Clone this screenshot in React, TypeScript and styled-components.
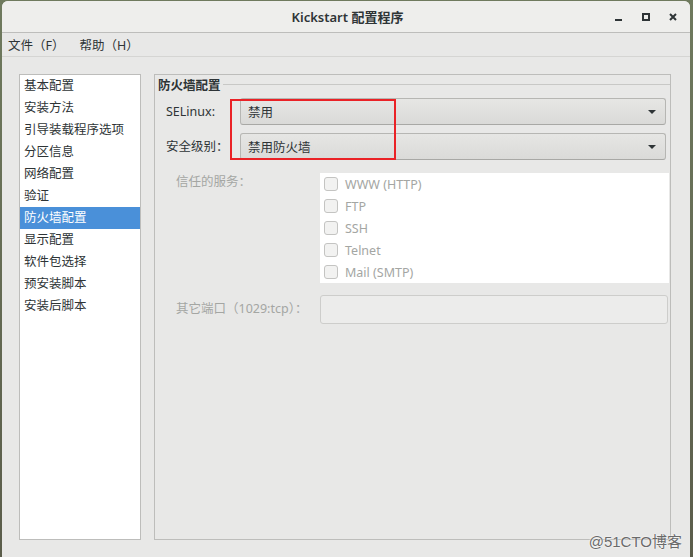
import React from "react";
import styled, { createGlobalStyle } from "styled-components";

const GlobalStyle = createGlobalStyle`
  html, body {
    margin: 0;
    padding: 0;
  }
  body {
    font-family: "Noto Sans", "Noto Sans CJK SC", sans-serif;
    font-size: 12.5px;
    color: #2e3436;
  }
`;

const Desktop = styled.div`
  position: relative;
  width: 693px;
  height: 557px;
  box-sizing: border-box;
  padding: 1px 3px 0 2px;
  background: linear-gradient(180deg, #6f7a5e 0%, #5b5d4b 100%);
  overflow: hidden;
`;

const Window = styled.div`
  display: flex;
  flex-direction: column;
  height: 100%;
  background: #e8e8e7;
  border-radius: 6px 6px 0 0;
  overflow: hidden;
`;

const TitleBar = styled.div`
  position: relative;
  display: flex;
  align-items: center;
  justify-content: center;
  height: 31px;
  flex-shrink: 0;
  padding-left: 3px;
  background: #eeeeec;
  border-bottom: 1px solid #bdbdbb;
  font-size: 13px;
  font-weight: 600;
  color: #2e3436;
`;

const Controls = styled.div`
  position: absolute;
  right: 6px;
  top: 0;
  height: 100%;
  display: flex;
  align-items: center;
`;

const ControlButton = styled.span`
  display: flex;
  align-items: center;
  justify-content: center;
  width: 22px;
  height: 22px;
  margin-left: 5px;
`;

const MenuBar = styled.div`
  display: flex;
  height: 23px;
  flex-shrink: 0;
  align-items: center;
  padding-left: 6px;
  border-bottom: 1px solid #d5d5d3;
  font-size: 12.5px;
  color: #2e3436;
`;

const MenuItem = styled.span`
  margin-right: 15px;
`;

const Body = styled.div`
  flex: 1;
  display: flex;
  gap: 13px;
  padding: 17px 19px 17px 17px;
  min-height: 0;
`;

const Sidebar = styled.ul`
  width: 122px;
  box-sizing: border-box;
  margin: 0;
  padding: 0;
  list-style: none;
  background: #ffffff;
  border: 1px solid #bdbdbb;
`;

const SideItem = styled.li<{ $active?: boolean }>`
  height: 22px;
  line-height: 22px;
  padding-left: 4px;
  background: ${(p) => (p.$active ? "#4a90d9" : "transparent")};
  color: ${(p) => (p.$active ? "#ffffff" : "#2e3436")};
`;

const Frame = styled.section`
  position: relative;
  flex: 1;
  display: flex;
  flex-direction: column;
  border: 1px solid #bdbdbb;
`;

const FrameHeader = styled.div`
  display: flex;
  align-items: center;
  height: 18px;
  padding-left: 3px;
`;

const FrameTitle = styled.span`
  font-weight: 700;
  margin-right: 2px;
`;

const HeaderRule = styled.span`
  flex: 1;
  height: 0;
  border-top: 1px solid #c8c8c6;
  margin-top: 1px;
`;

const FrameBody = styled.div`
  display: flex;
  flex-direction: column;
  padding: 5px 1px 0 11px;
`;

const Row = styled.div<{ $gap: number; $indent?: number }>`
  display: flex;
  align-items: flex-start;
  margin-top: ${(p) => p.$gap}px;
  padding-left: ${(p) => p.$indent || 0}px;
`;

const Label = styled.span<{ $width: number; $dim?: boolean; $h: number }>`
  width: ${(p) => p.$width}px;
  flex-shrink: 0;
  height: ${(p) => p.$h}px;
  line-height: ${(p) => p.$h}px;
  color: ${(p) => (p.$dim ? "#a4a6a3" : "#2e3436")};
`;

const Combo = styled.div`
  flex: 1;
  display: flex;
  align-items: center;
  justify-content: space-between;
  height: 27px;
  box-sizing: border-box;
  margin-right: 3px;
  padding: 0 9px 0 7px;
  border: 1px solid #b6b6b3;
  border-bottom-color: #a8a8a5;
  border-radius: 3px;
  background: linear-gradient(180deg, #e6e6e4 0%, #dadad8 100%);
  color: #2e3436;
`;

const Arrow = styled.span`
  width: 0;
  height: 0;
  border-left: 4px solid transparent;
  border-right: 4px solid transparent;
  border-top: 4px solid #2e3436;
`;

const ServiceBox = styled.div`
  flex: 1;
  height: 110px;
  background: #ffffff;
  padding-left: 4px;
`;

const Service = styled.div`
  display: flex;
  align-items: center;
  height: 22px;
  color: #a4a6a3;
`;

const Check = styled.span`
  width: 12px;
  height: 12px;
  border: 1px solid #c4c4c2;
  border-radius: 3px;
  background: #f2f2f1;
  margin-right: 7px;
`;

const Entry = styled.div`
  flex: 1;
  height: 29px;
  box-sizing: border-box;
  margin-right: 1px;
  border: 1px solid #cdcdcb;
  border-radius: 3px;
  background: #ececeb;
`;

const Annotation = styled.div`
  position: absolute;
  left: 75px;
  top: 24px;
  width: 166px;
  height: 61px;
  box-sizing: border-box;
  border: 2px solid #ea2226;
  pointer-events: none;
`;

const Watermark = styled.div`
  position: absolute;
  right: 11px;
  bottom: 6px;
  font-family: "Liberation Sans", "Noto Sans CJK SC", sans-serif;
  font-size: 15px;
  color: #6a6a6a;
  text-shadow: 0 0 2px #ffffff, 0 0 1px #ffffff;
`;

const sections = [
  "基本配置",
  "安装方法",
  "引导装载程序选项",
  "分区信息",
  "网络配置",
  "验证",
  "防火墙配置",
  "显示配置",
  "软件包选择",
  "预安装脚本",
  "安装后脚本",
];

const services = ["WWW (HTTP)", "FTP", "SSH", "Telnet", "Mail (SMTP)"];

const App = () => {
  return (
    <Desktop>
      <GlobalStyle />
      <Window>
        <TitleBar>
          Kickstart 配置程序
          <Controls>
            <ControlButton>
              <svg width="10" height="10" viewBox="0 0 10 10">
                <rect x="1" y="7" width="7" height="2" fill="#2e3436" />
              </svg>
            </ControlButton>
            <ControlButton>
              <svg width="10" height="10" viewBox="0 0 10 10">
                <rect x="2" y="2" width="6" height="6" fill="none" stroke="#2e3436" strokeWidth="2" />
              </svg>
            </ControlButton>
            <ControlButton>
              <svg width="10" height="10" viewBox="0 0 10 10">
                <path d="M2 2 L8 8 M8 2 L2 8" stroke="#2e3436" strokeWidth="2" />
              </svg>
            </ControlButton>
          </Controls>
        </TitleBar>
        <MenuBar>
          <MenuItem>文件（F）</MenuItem>
          <MenuItem>帮助（H）</MenuItem>
        </MenuBar>
        <Body>
          <Sidebar>
            {sections.map((s) => (
              <SideItem key={s} $active={s === "防火墙配置"}>
                {s}
              </SideItem>
            ))}
          </Sidebar>
          <Frame>
            <FrameHeader>
              <FrameTitle>防火墙配置</FrameTitle>
              <HeaderRule />
            </FrameHeader>
            <FrameBody>
              <Row $gap={0}>
                <Label $width={74} $h={27}>SELinux:</Label>
                <Combo>
                  <span>禁用</span>
                  <Arrow />
                </Combo>
              </Row>
              <Row $gap={8}>
                <Label $width={74} $h={27}>安全级别：</Label>
                <Combo>
                  <span>禁用防火墙</span>
                  <Arrow />
                </Combo>
              </Row>
              <Row $gap={13} $indent={10}>
                <Label $width={144} $h={17} $dim>信任的服务：</Label>
                <ServiceBox>
                  {services.map((s) => (
                    <Service key={s}>
                      <Check />
                      {s}
                    </Service>
                  ))}
                </ServiceBox>
              </Row>
              <Row $gap={12} $indent={10}>
                <Label $width={144} $h={27} $dim>其它端口（1029:tcp）：</Label>
                <Entry />
              </Row>
            </FrameBody>
            <Annotation />
          </Frame>
        </Body>
      </Window>
      <Watermark>@51CTO博客</Watermark>
    </Desktop>
  );
};

export default App;
